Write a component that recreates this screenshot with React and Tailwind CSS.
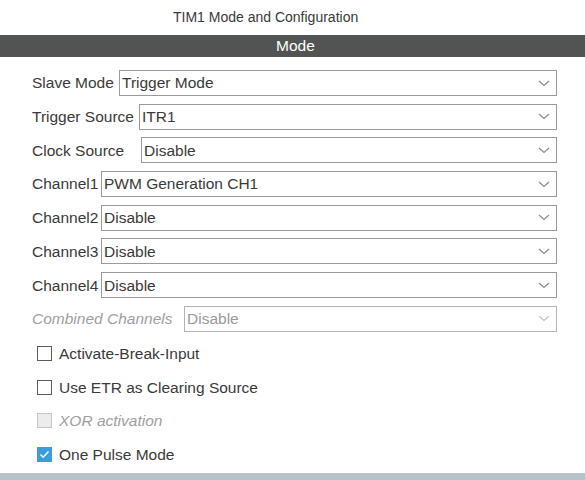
import React from 'react';

const rows = [
  { label: 'Slave Mode', value: 'Trigger Mode', lw: 'w-[87px]' },
  { label: 'Trigger Source', value: 'ITR1', lw: 'w-[107px]' },
  { label: 'Clock Source', value: 'Disable', lw: 'w-[109px]' },
  { label: 'Channel1', value: 'PWM Generation CH1', lw: 'w-[69px]' },
  { label: 'Channel2', value: 'Disable', lw: 'w-[69px]' },
  { label: 'Channel3', value: 'Disable', lw: 'w-[69px]' },
  { label: 'Channel4', value: 'Disable', lw: 'w-[69px]' },
  { label: 'Combined Channels', value: 'Disable', lw: 'w-[152px]', disabled: true },
];

const checks = [
  { label: 'Activate-Break-Input' },
  { label: 'Use ETR as Clearing Source' },
  { label: 'XOR activation', disabled: true },
  { label: 'One Pulse Mode', checked: true },
];

const Chevron = ({ disabled }) => (
  <svg width="12" height="7" viewBox="0 0 12 7" className="shrink-0">
    <polyline points="1,1 6,5.5 11,1" fill="none" stroke={disabled ? '#c4c4c4' : '#8c8c8c'} strokeWidth="1.2" />
  </svg>
);

const SelectRow = ({ label, value, lw, disabled }) => (
  <div className="flex items-center h-[26px]">
    <span className={`${lw} shrink-0 whitespace-nowrap ${disabled ? 'italic text-[#a0a0a0]' : 'text-[#3a3a3a]'}`}>{label}</span>
    <div className={`flex-1 h-full flex items-center justify-between pl-[2px] pr-[6px] border bg-white ${disabled ? 'border-[#b4b4b4] text-[#9a9a9a]' : 'border-[#9a9a9a] text-[#3a3a3a]'}`}>
      <span>{value}</span>
      <Chevron disabled={disabled} />
    </div>
  </div>
);

const CheckRow = ({ label, checked, disabled }) => (
  <div className="flex items-center h-[26px] pl-[5px]">
    {checked ? (
      <span className="w-[15px] h-[15px] bg-[#3a9edb] flex items-center justify-center">
        <svg width="11" height="9" viewBox="0 0 11 9">
          <polyline points="1.5,4.5 4.2,7.2 9.5,1.5" fill="none" stroke="white" strokeWidth="1.6" />
        </svg>
      </span>
    ) : (
      <span className={`w-[15px] h-[15px] border-[1.5px] ${disabled ? 'border-[#c6c6c6] bg-[#ececec]' : 'border-[#5c5c5c] bg-white'}`} />
    )}
    <span className={`ml-[7px] ${disabled ? 'italic text-[#a0a0a0]' : 'text-[#3a3a3a]'}`}>{label}</span>
  </div>
);

export default function App() {
  return (
    <div className="h-screen flex flex-col bg-white font-['Liberation_Sans',Arial,sans-serif] text-[15.5px] overflow-hidden">
      <div className="h-[35px] flex items-center pl-[173px] text-[14px] text-[#3a3a3a]">TIM1 Mode and Configuration</div>
      <div className="h-[22px] bg-[#525453] flex items-center pl-[276px] text-white">Mode</div>
      <div className="flex-1 flex flex-col gap-[7.7px] pt-[13px] pl-[32px] pr-[28px]">
        {rows.map((r, i) => (
          <SelectRow key={i} {...r} />
        ))}
        <div className="flex flex-col gap-[7.7px] mt-[1px]">
          {checks.map((c, i) => (
            <CheckRow key={i} {...c} />
          ))}
        </div>
      </div>
      <div className="h-[7px] bg-[#b8c3c9]" />
    </div>
  );
}
